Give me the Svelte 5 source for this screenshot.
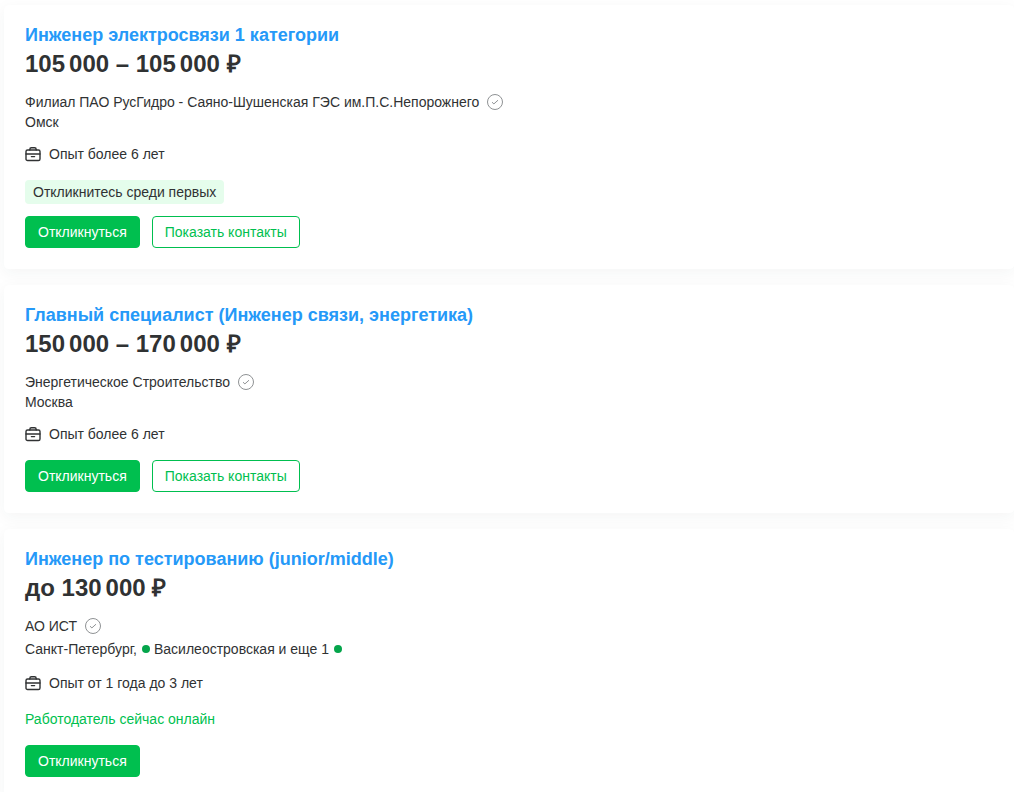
<script lang="ts">
	interface Vacancy {
		title: string;
		salary: string;
		company: string;
		city: string;
		metro?: string;
		experience: string;
		tag?: string;
		online?: boolean;
		contacts?: boolean;
	}

	const vacancies: Vacancy[] = [
		{
			title: 'Инженер электросвязи 1 категории',
			salary: '105\u2006000 – 105\u2006000 ₽',
			company: 'Филиал ПАО РусГидро - Саяно-Шушенская ГЭС им.П.С.Непорожнего',
			city: 'Омск',
			experience: 'Опыт более 6 лет',
			tag: 'Откликнитесь среди первых',
			contacts: true
		},
		{
			title: 'Главный специалист (Инженер связи, энергетика)',
			salary: '150\u2006000 – 170\u2006000 ₽',
			company: 'Энергетическое Строительство',
			city: 'Москва',
			experience: 'Опыт более 6 лет',
			contacts: true
		},
		{
			title: 'Инженер по тестированию (junior/middle)',
			salary: 'до 130\u2006000 ₽',
			company: 'АО ИСТ',
			city: 'Санкт-Петербург,',
			metro: 'Василеостровская и еще 1',
			experience: 'Опыт от 1 года до 3 лет',
			online: true
		}
	];
</script>

<main class="list">
	{#each vacancies as v}
		<article class="card">
			<h2 class="title"><a href="#vacancy">{v.title}</a></h2>
			<div class="salary">{v.salary}</div>

			<div class="company">
				<a href="#company">{v.company}</a>
				<svg class="verified" viewBox="0 0 16 16" aria-hidden="true">
					<circle cx="8" cy="8" r="7.5" />
					<path d="M5 8.2l1.9 1.7L11 6.2" />
				</svg>
			</div>
			{#if v.metro}
				<div class="address metro">
					<span>{v.city}</span>
					<span class="dot"></span>
					<span>{v.metro}</span>
					<span class="dot"></span>
				</div>
			{:else}
				<div class="address">{v.city}</div>
			{/if}

			<div class="experience">
				<svg class="case" viewBox="0 0 16 16" aria-hidden="true">
					<rect x="1" y="4" width="14" height="10.5" rx="1.6" />
					<path d="M4.8 4V3.4a1.6 1.6 0 0 1 1.6-1.6h3.2a1.6 1.6 0 0 1 1.6 1.6V4M1 8h14M6.4 10.6h3.2" />
				</svg>
				<span>{v.experience}</span>
			</div>

			{#if v.tag}
				<div class="tag">{v.tag}</div>
			{/if}
			{#if v.online}
				<div class="online">Работодатель сейчас онлайн</div>
			{/if}

			<div class="actions" class:tight={v.tag}>
				<button class="btn primary" type="button">Откликнуться</button>
				{#if v.contacts}
					<button class="btn" type="button">Показать контакты</button>
				{/if}
			</div>
		</article>
	{/each}
</main>

<style>
	:global(body) {
		background: #fff;
	}

	.list {
		display: flex;
		flex-direction: column;
		gap: 16px;
		padding: 5px 0 16px 4px;
		overflow: hidden;
		color: #303233;
		font-family: 'Liberation Sans', Arial, sans-serif;
		font-size: 14px;
		line-height: 20px;
	}

	.card {
		padding: 20px;
		border: 1px solid #fff;
		border-radius: 4px;
		background: #fff;
		box-shadow: 0 4px 16px rgba(48, 50, 51, 0.05);
	}

	a {
		color: inherit;
		text-decoration: none;
	}

	.title {
		margin: 0;
		color: #2599f8;
		font-size: 18px;
		font-weight: 700;
		line-height: 18px;
	}

	.salary {
		margin: 6px 0 14px;
		font-size: 24px;
		font-weight: 700;
		line-height: 28px;
	}

	.company {
		display: flex;
		align-items: center;
		gap: 8px;
	}

	.verified {
		width: 16px;
		height: 16px;
		fill: none;
		stroke: #8f9294;
		stroke-width: 1;
	}

	.address.metro {
		display: flex;
		align-items: center;
		gap: 4px;
		padding: 3px 0 2px;
	}

	.dot {
		width: 8px;
		height: 8px;
		margin-left: 1px;
		border-radius: 50%;
		background: #04a54b;
	}

	.experience {
		display: flex;
		align-items: center;
		gap: 8px;
		margin-top: 12px;
	}

	.case {
		width: 16px;
		height: 16px;
		fill: none;
		stroke: #303233;
		stroke-width: 1.4;
		stroke-linecap: round;
	}

	.tag {
		width: fit-content;
		margin-top: 16px;
		padding: 2px 8px;
		border-radius: 4px;
		background: #e5fdec;
	}

	.online {
		margin-top: 16px;
		color: #00bf4f;
	}

	.actions {
		display: flex;
		gap: 12px;
		margin-top: 16px;
	}

	.actions.tight {
		margin-top: 12px;
	}

	.btn {
		height: 32px;
		padding: 0 12px;
		border: 1px solid #00bf4f;
		border-radius: 4px;
		background: #fff;
		color: #00bf4f;
		font-family: inherit;
		font-size: 14px;
		line-height: 20px;
		cursor: pointer;
	}

	.btn.primary {
		background: #00bf4f;
		color: #fff;
	}
</style>
